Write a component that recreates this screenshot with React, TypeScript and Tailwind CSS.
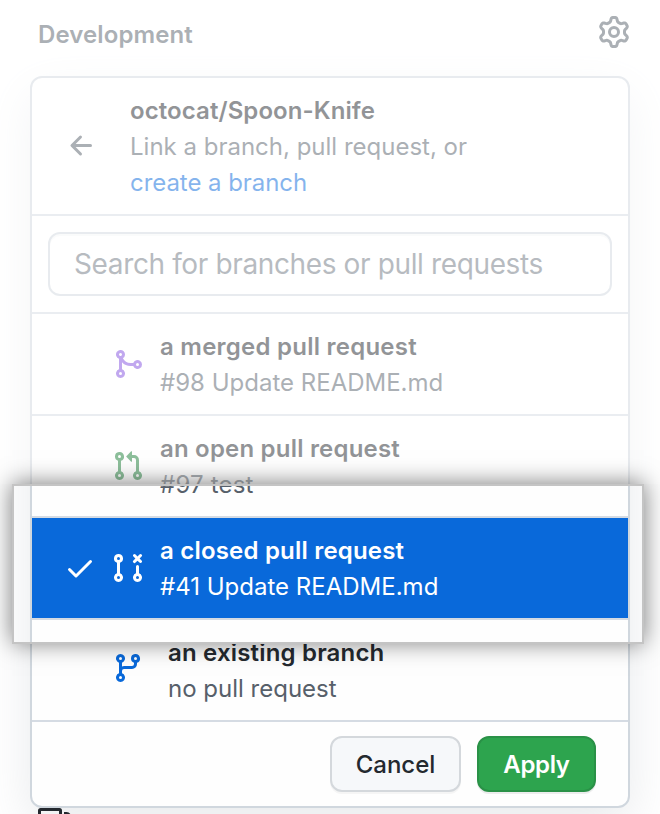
import type { ReactNode } from "react";

function Icon({ d, className }: { d: string; className?: string }) {
  return (
    <svg viewBox="0 0 16 16" width="32" height="32" fill="currentColor" fillRule="evenodd" className={`shrink-0 ${className ?? ""}`}>
      <path d={d} />
    </svg>
  );
}

const GEAR =
  "M7.429 1.525a6.593 6.593 0 011.142 0c.036.003.108.036.137.146l.289 1.105c.147.56.55.967.997 1.189.174.086.341.183.501.29.417.278.97.423 1.53.27l1.102-.303c.11-.03.175.016.195.046.219.31.41.641.573.989.014.031.022.11-.059.19l-.815.806c-.411.406-.562.957-.53 1.456a4.588 4.588 0 010 .582c-.032.499.119 1.05.53 1.456l.815.806c.08.08.073.159.059.19a6.494 6.494 0 01-.573.99c-.02.029-.086.074-.195.045l-1.103-.303c-.559-.153-1.112-.008-1.529.27-.16.107-.327.204-.5.29-.449.222-.851.628-.998 1.189l-.289 1.105c-.029.11-.101.143-.137.146a6.613 6.613 0 01-1.142 0c-.036-.003-.108-.037-.137-.146l-.289-1.105c-.147-.56-.55-.967-.997-1.189a4.502 4.502 0 01-.501-.29c-.417-.278-.97-.423-1.53-.27l-1.102.303c-.11.03-.175-.016-.195-.046a6.492 6.492 0 01-.573-.989c-.014-.031-.022-.11.059-.19l.815-.806c.411-.406.562-.957.53-1.456a4.587 4.587 0 010-.582c.032-.499-.119-1.05-.53-1.456l-.815-.806c-.08-.08-.073-.159-.059-.19a6.44 6.44 0 01.573-.99c.02-.029.086-.075.195-.045l1.103.303c.559.153 1.112.008 1.529-.27.16-.107.327-.204.5-.29.449-.222.851-.628.998-1.189l.289-1.105c.029-.11.101-.143.137-.146zM8 0c-.236 0-.47.01-.701.03-.743.065-1.29.615-1.458 1.261l-.29 1.106c-.017.066-.078.158-.211.224a5.994 5.994 0 00-.668.386c-.123.082-.233.09-.3.071L3.27 2.776c-.644-.177-1.392.02-1.82.63a7.977 7.977 0 00-.704 1.217c-.315.675-.111 1.422.363 1.891l.815.806c.05.048.098.147.088.294a6.084 6.084 0 000 .772c.01.147-.038.246-.088.294l-.815.806c-.474.469-.678 1.216-.363 1.891.2.428.436.835.704 1.218.428.609 1.176.806 1.82.63l1.103-.303c.066-.019.176-.011.299.071.213.143.436.272.668.386.133.066.194.158.212.224l.289 1.106c.169.646.715 1.196 1.458 1.26a8.094 8.094 0 001.402 0c.743-.064 1.29-.614 1.458-1.26l.29-1.106c.017-.066.078-.158.211-.224a5.98 5.98 0 00.668-.386c.123-.082.233-.09.3-.071l1.102.302c.644.177 1.392-.02 1.82-.63.268-.382.505-.789.704-1.217.315-.675.111-1.422-.364-1.891l-.814-.806c-.05-.048-.098-.147-.088-.294a6.1 6.1 0 000-.772c-.01-.147.039-.246.088-.294l.814-.806c.475-.469.679-1.216.364-1.891a7.992 7.992 0 00-.704-1.218c-.428-.609-1.176-.806-1.82-.63l-1.103.303c-.066.019-.176.011-.299-.071a5.991 5.991 0 00-.668-.386c-.133-.066-.194-.158-.212-.224L10.16 1.29C9.99.645 9.444.095 8.701.031A8.094 8.094 0 008 0zm1.5 8a1.5 1.5 0 11-3 0 1.5 1.5 0 013 0zM11 8a3 3 0 11-6 0 3 3 0 016 0z";
const ARROW_LEFT =
  "M7.78 12.53a.75.75 0 01-1.06 0L2.47 8.28a.75.75 0 010-1.06l4.25-4.25a.75.75 0 011.06 1.06L4.81 7h7.44a.75.75 0 010 1.5H4.81l2.97 2.97a.75.75 0 010 1.06z";
const CHECK =
  "M13.78 4.22a.75.75 0 010 1.06l-7.25 7.25a.75.75 0 01-1.06 0L2.22 9.28a.75.75 0 011.06-1.06L6 10.94l6.72-6.72a.75.75 0 011.06 0z";
const MERGE =
  "M5 3.254V3.25v.005a.75.75 0 110-.005v.004zm.45 1.9a2.25 2.25 0 10-1.95.218v5.256a2.25 2.25 0 101.5 0V7.123A5.735 5.735 0 009.25 9h1.378a2.251 2.251 0 100-1.5H9.25a4.25 4.25 0 01-3.8-2.346zM12.75 9a.75.75 0 100-1.5.75.75 0 000 1.5zm-8.5 4.5a.75.75 0 100-1.5.75.75 0 000 1.5z";
const PULL =
  "M7.177 3.073L9.573.677A.25.25 0 0110 .854v4.792a.25.25 0 01-.427.177L7.177 3.427a.25.25 0 010-.354zM3.75 2.5a.75.75 0 100 1.5.75.75 0 000-1.5zm-2.25.75a2.25 2.25 0 113 2.122v5.256a2.251 2.251 0 11-1.5 0V5.372A2.25 2.25 0 011.5 3.25zM11 2.5h-1V4h1a1 1 0 011 1v5.628a2.251 2.251 0 101.5 0V5A2.5 2.5 0 0011 2.5zm1 10.25a.75.75 0 111.5 0 .75.75 0 01-1.5 0zM3.75 12a.75.75 0 100 1.5.75.75 0 000-1.5z";
const CLOSED =
  "M10.72 1.227a.75.75 0 011.06 0l.97.97.97-.97a.75.75 0 111.06 1.061l-.97.97.97.97a.75.75 0 01-1.06 1.06l-.97-.97-.97.97a.75.75 0 11-1.06-1.06l.97-.97-.97-.97a.75.75 0 010-1.06zM12.75 6.5a.75.75 0 00-.75.75v3.378a2.251 2.251 0 101.5 0V7.25a.75.75 0 00-.75-.75zm0 5.5a.75.75 0 100 1.5.75.75 0 000-1.5zM2.5 3.25a.75.75 0 111.5 0 .75.75 0 01-1.5 0zM3.25 1a2.25 2.25 0 00-.75 4.372v5.256a2.251 2.251 0 101.5 0V5.372A2.25 2.25 0 003.25 1zm0 11a.75.75 0 100 1.5.75.75 0 000-1.5z";
const BRANCH =
  "M11.75 2.5a.75.75 0 100 1.5.75.75 0 000-1.5zm-2.25.75a2.25 2.25 0 113 2.122V6A2.5 2.5 0 0110 8.5H6a1 1 0 00-1 1v1.128a2.251 2.251 0 11-1.5 0V5.372a2.25 2.25 0 111.5 0v1.836A2.492 2.492 0 016 7h4a1 1 0 001-1v-.628A2.25 2.25 0 019.5 3.25zM4.25 12a.75.75 0 100 1.5.75.75 0 000-1.5zM3.5 3.25a.75.75 0 111.5 0 .75.75 0 01-1.5 0z";

function Row({
  icon,
  iconClass,
  children,
  selected,
  gap = "ml-4",
}: {
  icon: string;
  iconClass: string;
  children: ReactNode;
  selected?: boolean;
  gap?: string;
}) {
  return (
    <div className={`flex h-[102px] items-center border-b-2 border-[#d5dbe3] pl-8 ${selected ? "bg-[#0969da] text-white" : "text-[#57606a]"}`}>
      <div className="w-12 shrink-0">{selected && <Icon d={CHECK} />}</div>
      <Icon d={icon} className={iconClass} />
      <div className={`pt-0.5 ${gap}`}>{children}</div>
    </div>
  );
}

export default function App() {
  return (
    <div className="relative h-[814px] w-[660px] overflow-hidden bg-white font-['Inter',sans-serif] text-2xl/9 whitespace-nowrap text-[#57606a]">
      <header className="flex h-[76px] items-start justify-between pt-4 pr-[30px] pl-[38px]">
        <h2 className="pt-px font-semibold tracking-[0.1px]">Development</h2>
        <Icon d={GEAR} />
      </header>

      <section className="mx-[30px] h-[732px] rounded-xl border-2 border-[#d0d7de] bg-[#fefefe] shadow-[0_16px_48px_rgba(140,149,159,0.2)]">
        <div className="flex h-[138px] items-center border-b-2 border-[#d5dbe3] pl-[34px]">
          <Icon d={ARROW_LEFT} />
          <div className="ml-8 pt-0.5">
            <div className="font-semibold tracking-[0.08px] text-[#24292f]">octocat/Spoon-Knife</div>
            <div>Link a branch, pull request, or</div>
            <div className="tracking-[-0.05px] text-[#0969da]">create a branch</div>
          </div>
        </div>

        <div className="flex h-[98px] items-center border-b-2 border-[#d5dbe3] px-4">
          <div className="flex h-16 grow items-center rounded-xl border-2 border-[#d0d7de] px-6 text-[28px] tracking-[-0.37px] text-[#6e7781] shadow-[inset_0_2px_0_rgba(208,215,222,0.2)]">
            Search for branches or pull requests
          </div>
        </div>

        <Row icon={MERGE} iconClass="text-[#8250df]">
          <div className="font-semibold tracking-[0.24px] text-[#24292f]">a merged pull request</div>
          <div>#98 Update README.md</div>
        </Row>
        <Row icon={PULL} iconClass="text-[#1a7f37]">
          <div className="font-semibold tracking-[0.2px] text-[#24292f]">an open pull request</div>
          <div className="tracking-[0.2px]">#97 test</div>
        </Row>
        <Row icon={CLOSED} iconClass="" selected>
          <div className="font-semibold tracking-[0.2px]">a closed pull request</div>
          <div>#41 Update README.md</div>
        </Row>
        <Row icon={BRANCH} iconClass="mb-1 text-[#0969da]" gap="ml-6">
          <div className="font-semibold tracking-[0.18px] text-[#24292f]">an existing branch</div>
          <div>no pull request</div>
        </Row>

        <div className="flex h-[84px] items-center justify-end gap-4 pr-8">
          <button className="h-14 w-[131px] rounded-xl border-2 border-[#d4d8dc] bg-[#f6f8fa] pt-0.5 font-medium text-[#24292f] shadow-[0_2px_0_rgba(27,31,36,0.04)]">
            Cancel
          </button>
          <button className="h-14 w-[119px] rounded-xl border-2 border-[#2a9147] bg-[#2da44e] pt-0.5 font-semibold tracking-[-0.35px] text-white shadow-[0_2px_0_rgba(27,31,36,0.08)]">
            Apply
          </button>
        </div>
      </section>

      <svg className="absolute top-[808px] left-[38px] text-[#24292f]" width="34" height="6" viewBox="0 0 34 6" fill="none" stroke="currentColor" strokeWidth="3">
        <path d="M1.5 8V2.5a1 1 0 0 1 1-1h19a1 1 0 0 1 1 1V8" />
        <path d="M26 5.5h2.5q2 0 3 2" />
      </svg>

      <div className="absolute inset-x-0 top-0 h-[484px] bg-white/50" />
      <div className="absolute top-[484px] left-3 h-40 w-[632px] border-2 border-[#c4c4c4] shadow-[0_-1px_22px_rgba(0,0,0,0.5)]" />
    </div>
  );
}
